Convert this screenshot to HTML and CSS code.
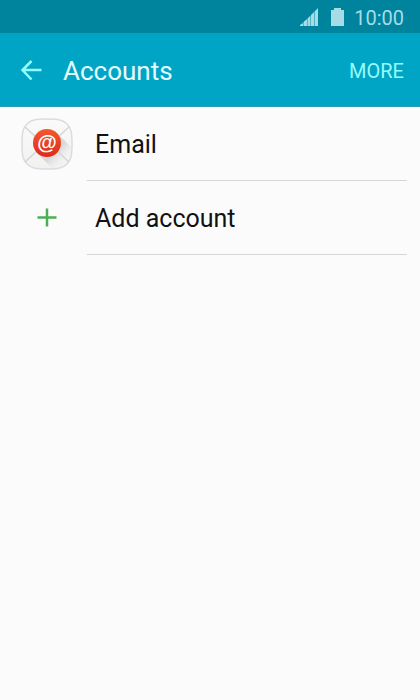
FILE: index.html
```
<!DOCTYPE html>
<html lang="en">
  <head>
    <meta charset="UTF-8" />
    <meta name="viewport" content="width=device-width, initial-scale=1.0" />
    <title>Accounts</title>
    <link rel="stylesheet" href="styles.css">
  </head>
  <body>
    <div class="status-bar">
      <svg class="signal-icon" width="18" height="18" viewBox="0 0 18 18" aria-hidden="true">
        <path d="M0 18v-1l3-2v3zM3.500 18v-4l3.500-3v7zM7.500 18v-7.500l3-3V18zM11 18V7l3-3v14zM14.500 18V3.500L18 0v18z" />
      </svg>
      <svg class="battery-icon" width="13" height="18" viewBox="0 0 13 18" aria-hidden="true">
        <path d="M3 0h7v2h3v16H0V2h3z" />
      </svg>
      <span class="clock">10:00</span>
    </div>
    <header class="app-bar">
      <button class="back-button" type="button" aria-label="Back">
        <svg width="22" height="22" viewBox="0 0 22 22" aria-hidden="true">
          <path d="M11.500 1L2.500 10l9 9.500M2 10h19.500" />
        </svg>
      </button>
      <h1>Accounts</h1>
      <button class="more-button" type="button">MORE</button>
    </header>
    <main>
      <ul class="account-list">
        <li>
          <a class="account-link" href="#">
            <span class="account-icon">
              <svg width="52" height="52" viewBox="0 0 52 52" aria-hidden="true">
                <defs>
                  <linearGradient id="paper" x1="0" y1="0" x2="0" y2="1">
                    <stop offset="0" stop-color="#fafafa" />
                    <stop offset="1" stop-color="#f1f1f0" />
                  </linearGradient>
                  <linearGradient id="seal" x1="0" y1="0" x2="0" y2="1">
                    <stop offset="0" stop-color="#f5592c" />
                    <stop offset="1" stop-color="#dc2a1c" />
                  </linearGradient>
                  <linearGradient id="shade" gradientUnits="userSpaceOnUse" x1="26" y1="25" x2="43" y2="42">
                    <stop offset="0.500" stop-color="#d8d8d8" />
                    <stop offset="1" stop-color="#e4e4e4" stop-opacity="0" />
                  </linearGradient>
                </defs>
                <path d="M26 1C38 1 42 2 46 6c4 4 5 8 5 20s-1 16-5 20c-4 4-8 5-20 5s-16-1-20-5c-4-4-5-8-5-20S2 10 6 6c4-4 8-5 20-5z" fill="url(#paper)" stroke="#dcdcdf" stroke-width="1.500" />
                <path d="M36 15l14 14c0 7-1 13-4 16s-9 5-15 5L16 35z" fill="url(#shade)" />
                <path d="M4 9l13 12M48 9L35 21M4 44l13-12M48 44L35 32" fill="none" stroke="#d6d6d8" stroke-width="1.500" />
                <circle cx="26" cy="25" r="14" fill="url(#seal)" />
                <text class="at-sign" x="26" y="31" text-anchor="middle">@</text>
              </svg>
            </span>
            <span class="account-name">Email</span>
          </a>
        </li>
        <li>
          <a class="account-link" href="#">
            <span class="account-icon">
              <svg width="20" height="20" viewBox="0 0 20 20" aria-hidden="true">
                <path d="M10 0.500v18M0.500 9.500h19" fill="none" stroke="#4caf50" stroke-width="2.500" />
              </svg>
            </span>
            <span class="account-name">Add account</span>
          </a>
        </li>
      </ul>
    </main>
  </body>
</html>
```
FILE: styles.css
```
* {
  box-sizing: border-box;
}

body {
  margin: 0;
  font-family: Roboto, "Liberation Sans", sans-serif;
  background-color: #fbfbfb;
  color: #111;
}

.status-bar {
  display: flex;
  align-items: center;
  justify-content: flex-end;
  height: 33px;
  padding: 0 16px;
  background-color: #00839d;
  color: #a6dce6;
}

.status-bar svg {
  fill: #a6dce6;
}

.signal-icon {
  margin-right: 13px;
}

.battery-icon {
  margin-right: 10px;
}

.clock {
  padding-top: 2px;
  font-size: 20px;
  line-height: 24px;
}

.app-bar {
  display: flex;
  align-items: center;
  height: 74px;
  padding: 2px 16px 0 20px;
  background-color: #00a5c5;
  border-bottom: 1px solid #2e9fb5;
}

.app-bar h1 {
  flex: 1;
  margin: 0;
  font-size: 26px;
  line-height: 32px;
  font-weight: 400;
  color: #e4fcff;
}

.back-button,
.more-button {
  padding: 0;
  border: none;
  background: none;
  color: #94fcfc;
  font-family: inherit;
  cursor: pointer;
}

.back-button {
  display: flex;
  margin-right: 21px;
}

.back-button path {
  fill: none;
  stroke: #94fcfc;
  stroke-width: 2.5;
}

.more-button {
  font-size: 20px;
  line-height: 24px;
}

.account-list {
  list-style: none;
  margin: 0;
  padding: 0;
}

.account-link {
  display: flex;
  height: 74px;
  padding-right: 13px;
  color: inherit;
  text-decoration: none;
}

.account-icon {
  display: flex;
  align-items: center;
  justify-content: center;
  width: 66px;
  margin: 0 7px 0 14px;
}

.account-name {
  display: flex;
  flex: 1;
  align-items: center;
  padding: 3px 0 0 8px;
  border-bottom: 1px solid #d6d6d6;
  font-size: 25px;
  line-height: 32px;
}

.at-sign {
  fill: #fff;
  font-family: "Liberation Sans", Arial, sans-serif;
  font-size: 20px;
  font-weight: 700;
}
```
